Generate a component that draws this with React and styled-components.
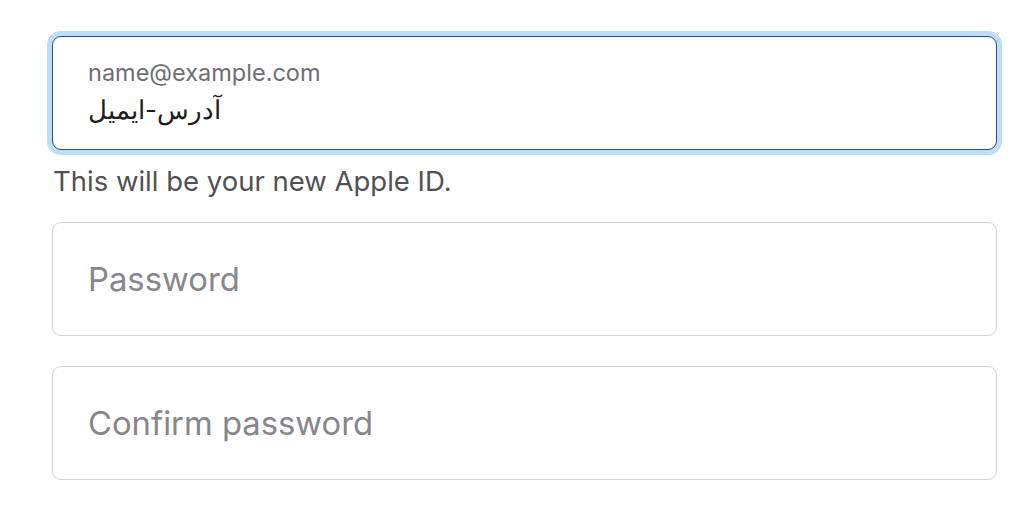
import React from "react";
import styled, { createGlobalStyle } from "styled-components";

const Global = createGlobalStyle`
  html, body { margin: 0; padding: 0; background: #fff; }
  body { font-family: Inter, "Liberation Sans", Arial, sans-serif; }
  * { box-sizing: border-box; }
`;

const Form = styled.form`
  width: 1024px;
  padding: 36px 27px 0 52px;
  display: flex;
  flex-direction: column;
`;

const Field = styled.label`
  display: flex;
  flex-direction: column;
  justify-content: center;
  height: 114px;
  padding: 0 35px;
  border: 1px solid ${(p) => (p.$focused ? "#1f527f" : "#d6d6d6")};
  border-radius: 9px;
  background: #fff;
  box-shadow: ${(p) => (p.$focused ? "0 0 0 5px #c0ddf7" : "none")};
  margin-top: ${(p) => p.$gap || 0}px;
`;

const SmallLabel = styled.span`
  font-size: 23.5px;
  line-height: 28px;
  color: #6e6e73;
`;

const Input = styled.input`
  border: none;
  outline: none;
  padding: 0;
  margin: 0;
  background: transparent;
  width: 100%;
  font-family: Inter, "Liberation Sans", Arial, sans-serif;
  font-size: ${(p) => p.$size}px;
  line-height: ${(p) => p.$lh}px;
  height: ${(p) => p.$lh}px;
  margin-top: ${(p) => p.$mt || 0}px;
  color: #1d1d1f;
  &::placeholder { color: #86868b; opacity: 1; }
`;

const Help = styled.p`
  margin: 14px 0 24px 1px;
  font-size: 27.5px;
  line-height: 34px;
  color: #515154;
`;

export default function App() {
  return (
    <>
      <Global />
      <Form onSubmit={(e) => e.preventDefault()}>
        <Field $focused>
          <SmallLabel>name@example.com</SmallLabel>
          <Input $size={26} $lh={36} $mt={5} defaultValue="آدرس-ایمیل" />
        </Field>
        <Help>This will be your new Apple ID.</Help>
        <Field>
          <Input $size={32.8} $lh={40} type="password" placeholder="Password" />
        </Field>
        <Field $gap={30}>
          <Input $size={32.8} $lh={40} type="password" placeholder="Confirm password" />
        </Field>
      </Form>
    </>
  );
}
